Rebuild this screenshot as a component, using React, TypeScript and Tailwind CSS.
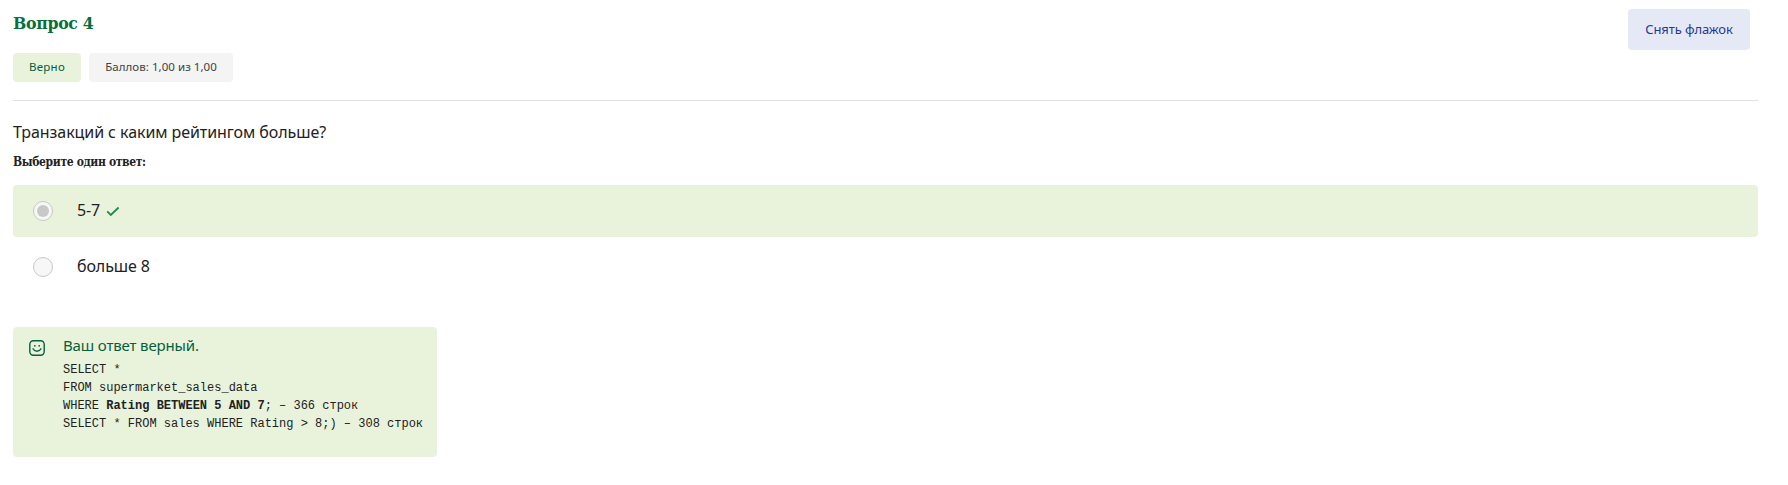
const serif = "font-['DejaVu_Serif_Condensed','DejaVu_Serif',serif]";

function Check() {
  return (
    <svg width="14" height="12" viewBox="0 0 14 12" fill="none" className="ml-[6px] mt-[1px]">
      <path d="M1.2 5.4 4.8 9 12.6 1.5" stroke="#1f8a4c" strokeWidth="1.8" />
    </svg>
  );
}

function Smile() {
  return (
    <svg width="16" height="16" viewBox="0 0 16 16" fill="none" stroke="#05603d" strokeWidth="1.4" strokeLinecap="round">
      <rect x="0.8" y="0.8" width="14.4" height="14.4" rx="3.6" />
      <path d="M4 8.8C4.8 10.4 6.2 11.2 8 11.2s3.2-.8 4-2.4" />
      <circle cx="5.8" cy="5.8" r="0.9" fill="#05603d" stroke="none" />
      <circle cx="10.2" cy="5.8" r="0.9" fill="#05603d" stroke="none" />
    </svg>
  );
}

function Radio({ checked }: { checked?: boolean }) {
  return (
    <span className="flex size-5 shrink-0 items-center justify-center rounded-full border border-[#c8c8c8] bg-[#f7f7f7]">
      {checked && <span className="size-3 rounded-full bg-[#c8c8c8]" />}
    </span>
  );
}

export default function App() {
  return (
    <main className="h-[485px] w-full overflow-hidden whitespace-nowrap bg-white pl-[13px] pr-[30px] font-['Noto_Sans',sans-serif] text-[#212121]">
      <header className="flex h-[101px] items-start justify-between border-b border-[#dfe0e2]">
        <div>
          <h1 className={`mt-[9px] h-[44px] text-[17.5px] font-bold leading-[29px] text-[#05703f] ${serif}`}>
            <span className="tracking-[-0.3px]">Вопрос 4</span>
          </h1>
          <div className="flex gap-2 text-[11.5px] leading-[28px]">
            <span className="h-[29px] w-[68px] rounded-[4px] bg-[#e9f3dc] text-center tracking-[0.3px] text-[#05603d]">Верно</span>
            <span className="h-[29px] w-[144px] rounded-[4px] bg-[#f4f4f4] text-center tracking-[0.05px] text-[#424242]">Баллов: 1,00 из 1,00</span>
          </div>
        </div>
        <button className="mr-2 mt-[9px] h-[41px] w-[122px] rounded-[4px] bg-[#e5e9f5] text-[13px] tracking-[-0.1px] text-[#1f3a93]">Снять флажок</button>
      </header>
      <p className="mt-[19px] h-[33px] text-[16px] leading-[24px] tracking-[-0.07px]">Транзакций с каким рейтингом больше?</p>
      <h2 className={`h-[32px] text-[12px] font-bold leading-[18px] tracking-[-0.36px] ${serif}`}>Выберите один ответ:</h2>
      <div className="flex h-[52px] items-center rounded-[4px] bg-[#e9f3dc] pl-5 text-[16px]">
        <Radio checked />
        <span className="-mt-[2px] ml-6 tracking-[-0.1px]">5-7</span>
        <Check />
      </div>
      <div className="mt-1 flex h-[52px] items-center pl-5 text-[16px]">
        <Radio />
        <span className="-mt-[2px] ml-6 tracking-[-0.1px]">больше 8</span>
      </div>
      <section className="mt-[34px] flex h-[130px] w-[424px] rounded-[4px] bg-[#e9f3dc] pl-4 pt-[8px]">
        <div className="mt-[5px]"><Smile /></div>
        <div className="ml-[18px]">
          <p className="h-[26px] text-[15px] leading-[21px] tracking-[-0.15px] text-[#05603d]">Ваш ответ верный.</p>
          <pre className="font-['Liberation_Mono',monospace] text-[12px] leading-[18px]">
            {"SELECT *\nFROM supermarket_sales_data\nWHERE "}
            <b>Rating BETWEEN 5 AND 7</b>
            {"; – 366 строк\nSELECT * FROM sales WHERE Rating > 8;) – 308 строк"}
          </pre>
        </div>
      </section>
    </main>
  );
}
